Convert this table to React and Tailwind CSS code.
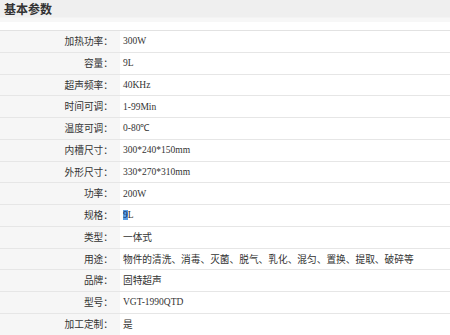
import React from 'react';

const CJK = { fontFamily: '"SimSun", "Noto Sans CJK SC", sans-serif' };

const rows = [
  ['加热功率：', '300W', 'latin'],
  ['容量：', '9L', 'latin'],
  ['超声频率：', '40KHz', 'latin'],
  ['时间可调：', '1-99Min', 'latin'],
  ['温度可调：', '0-80℃', 'latin'],
  ['内槽尺寸：', '300*240*150mm', 'latin'],
  ['外形尺寸：', '330*270*310mm', 'latin'],
  ['功率：', '200W', 'latin'],
  ['规格：', 'sel', 'latin'],
  ['类型：', '一体式', 'cjk'],
  ['用途：', '物件的清洗、消毒、灭菌、脱气、乳化、混匀、置换、提取、破碎等', 'cjk'],
  ['品牌：', '固特超声', 'cjk'],
  ['型号：', 'VGT-1990QTD', 'latin'],
  ['加工定制：', '是', 'cjk'],
];

function Value({ v, kind }) {
  if (v === 'sel') {
    return (
      <span className="font-['Liberation_Serif',serif] text-[9.5px]">
        <span className="bg-[#5c9fe4] text-[#10306a]">9</span>L
      </span>
    );
  }
  if (kind === 'latin') {
    return <span className="font-['Liberation_Serif',serif] text-[9.5px]">{v}</span>;
  }
  return <span className="text-[9.7px]" style={CJK}>{v}</span>;
}

export default function App() {
  return (
    <div className="w-[450px] h-[335px] overflow-hidden bg-white text-[#333]">
      <div className="h-[17px] bg-[#efefef] pl-[4px] flex items-center">
        <span className="text-[12px] font-bold text-[#333] leading-none" style={CJK}>基本参数</span>
      </div>
      <div className="h-[5px] bg-[#f7f7f7] border-t border-[#f3f3f3]" />
      <div className="h-[8px]" />
      <div className="border-t border-[#e2e2e2]">
        {rows.map(([label, v, kind]) => (
          <div key={label} className="flex h-[21.75px] border-b border-[#e6e6e6]">
            <div className="w-[120px] shrink-0 bg-[#f6f6f6] flex items-center justify-end pr-[7px]">
              <span className="text-[9.7px] text-[#333]" style={CJK}>{label}</span>
            </div>
            <div className="flex-1 flex items-center pl-[3px] text-[#333]">
              <Value v={v} kind={kind} />
            </div>
          </div>
        ))}
      </div>
    </div>
  );
}
